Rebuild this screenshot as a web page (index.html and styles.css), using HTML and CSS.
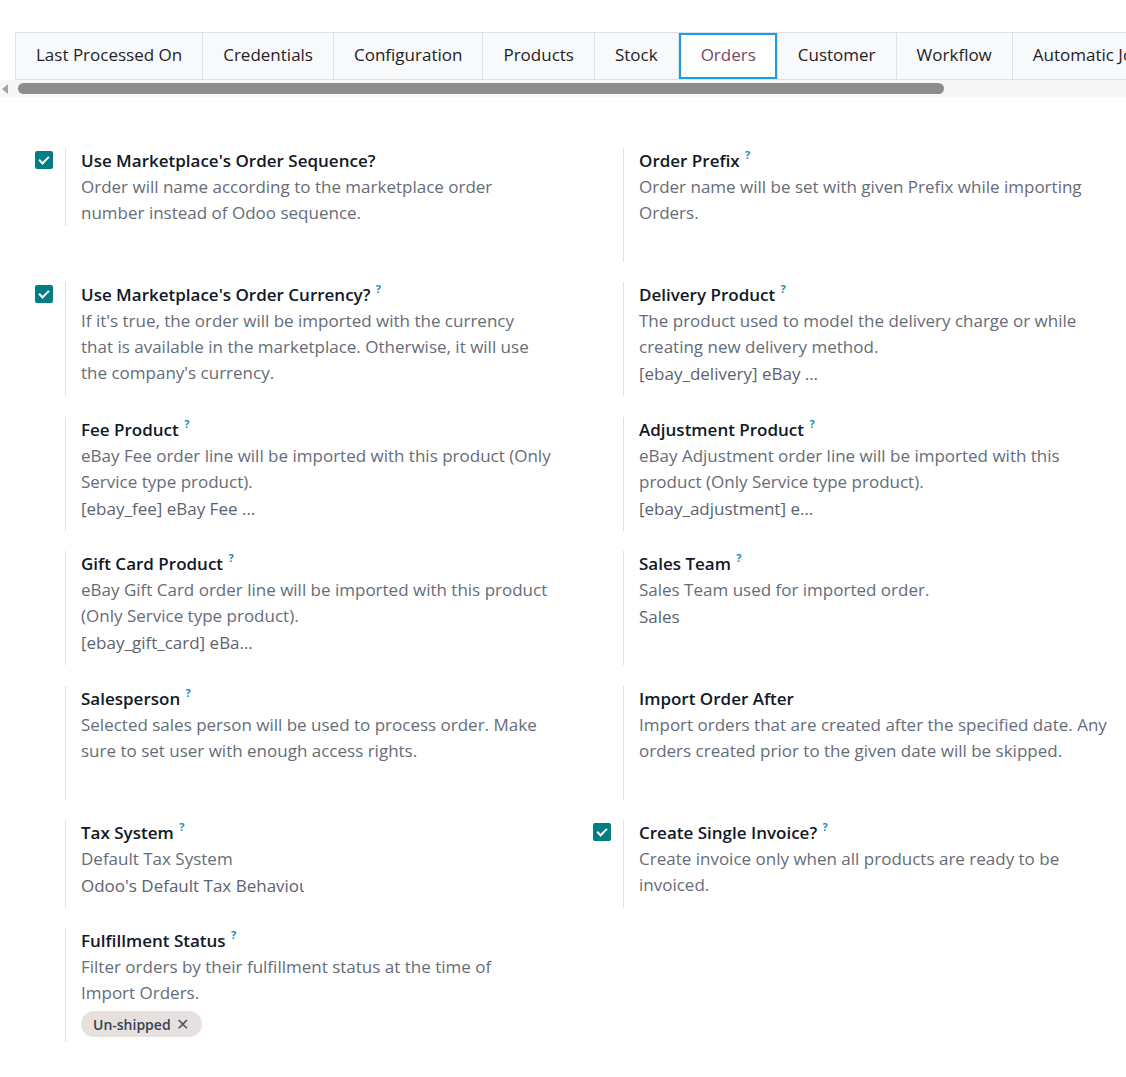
FILE: index.html
```html
<!DOCTYPE html>
<html lang="en">
<head>
  <meta charset="UTF-8">
  <title>eBay Instance - Orders</title>
  <link rel="stylesheet" href="styles.css">
</head>
<body>

  <div class="tabs-wrap">
    <nav class="tabs">
      <a class="tab">Last Processed On</a>
      <a class="tab">Credentials</a>
      <a class="tab">Configuration</a>
      <a class="tab">Products</a>
      <a class="tab">Stock</a>
      <a class="tab active">Orders</a>
      <a class="tab">Customer</a>
      <a class="tab">Workflow</a>
      <a class="tab">Automatic Jobs</a>
    </nav>
  </div>
  <div class="scroll-track">
    <span class="scroll-arrow"></span>
    <span class="scroll-thumb"></span>
  </div>

  <main class="settings">

    <div class="setting compact">
      <div class="setting-left"><span class="check"></span></div>
      <div class="setting-right">
        <div class="label">Use Marketplace's Order Sequence?</div>
        <div class="desc">Order will name according to the marketplace order<br>number instead of Odoo sequence.</div>
      </div>
    </div>

    <div class="setting">
      <div class="setting-left"></div>
      <div class="setting-right">
        <div class="label">Order Prefix <sup>?</sup></div>
        <div class="desc">Order name will be set with given Prefix while importing<br>Orders.</div>
        <div class="field"></div>
      </div>
    </div>

    <div class="setting">
      <div class="setting-left"><span class="check"></span></div>
      <div class="setting-right">
        <div class="label">Use Marketplace's Order Currency? <sup>?</sup></div>
        <div class="desc">If it's true, the order will be imported with the currency<br>that is available in the marketplace. Otherwise, it will use<br>the company's currency.</div>
      </div>
    </div>

    <div class="setting">
      <div class="setting-left"></div>
      <div class="setting-right">
        <div class="label">Delivery Product <sup>?</sup></div>
        <div class="desc">The product used to model the delivery charge or while<br>creating new delivery method.</div>
        <div class="field">[ebay_delivery] eBay …</div>
      </div>
    </div>

    <div class="setting">
      <div class="setting-left"></div>
      <div class="setting-right">
        <div class="label">Fee Product <sup>?</sup></div>
        <div class="desc">eBay Fee order line will be imported with this product (Only<br>Service type product).</div>
        <div class="field">[ebay_fee] eBay Fee …</div>
      </div>
    </div>

    <div class="setting">
      <div class="setting-left"></div>
      <div class="setting-right">
        <div class="label">Adjustment Product <sup>?</sup></div>
        <div class="desc">eBay Adjustment order line will be imported with this<br>product (Only Service type product).</div>
        <div class="field">[ebay_adjustment] e…</div>
      </div>
    </div>

    <div class="setting">
      <div class="setting-left"></div>
      <div class="setting-right">
        <div class="label">Gift Card Product <sup>?</sup></div>
        <div class="desc">eBay Gift Card order line will be imported with this product<br>(Only Service type product).</div>
        <div class="field">[ebay_gift_card] eBa…</div>
      </div>
    </div>

    <div class="setting">
      <div class="setting-left"></div>
      <div class="setting-right">
        <div class="label">Sales Team <sup>?</sup></div>
        <div class="desc">Sales Team used for imported order.</div>
        <div class="field">Sales</div>
      </div>
    </div>

    <div class="setting">
      <div class="setting-left"></div>
      <div class="setting-right">
        <div class="label">Salesperson <sup>?</sup></div>
        <div class="desc">Selected sales person will be used to process order. Make<br>sure to set user with enough access rights.</div>
        <div class="field"></div>
      </div>
    </div>

    <div class="setting">
      <div class="setting-left"></div>
      <div class="setting-right">
        <div class="label">Import Order After</div>
        <div class="desc">Import orders that are created after the specified date. Any<br>orders created prior to the given date will be skipped.</div>
        <div class="field"></div>
      </div>
    </div>

    <div class="setting">
      <div class="setting-left"></div>
      <div class="setting-right">
        <div class="label">Tax System <sup>?</sup></div>
        <div class="desc">Default Tax System</div>
        <div class="field select">Odoo's Default Tax Behaviour</div>
      </div>
    </div>

    <div class="setting">
      <div class="setting-left"><span class="check"></span></div>
      <div class="setting-right">
        <div class="label">Create Single Invoice? <sup>?</sup></div>
        <div class="desc">Create invoice only when all products are ready to be<br>invoiced.</div>
      </div>
    </div>

    <div class="setting">
      <div class="setting-left"></div>
      <div class="setting-right">
        <div class="label">Fulfillment Status <sup>?</sup></div>
        <div class="desc">Filter orders by their fulfillment status at the time of<br>Import Orders.</div>
        <div class="field">
          <span class="tag">Un-shipped <span class="tag-x">✕</span></span>
        </div>
      </div>
    </div>

  </main>

</body>
</html>
```
FILE: styles.css
```css
body {
  margin: 0;
  font-family: "Open Sans", sans-serif;
  font-size: 17px;
  line-height: 26px;
  color: #1f2328;
  background-color: #ffffff;
  overflow: hidden;
}

/* notebook tabs */
.tabs-wrap {
  margin: 32px 0 0 15px;
  overflow: hidden;
}
.tabs {
  display: flex;
  border-top: 1px solid #dee2e6;
  border-bottom: 1px solid #dee2e6;
  white-space: nowrap;
}
.tab {
  flex: none;
  padding: 0 20px;
  height: 46px;
  line-height: 44px;
  border-left: 1px solid #dee2e6;
  background-color: #f8f9fa;
  color: #1f2328;
}
.tab.active {
  padding: 0 21px 0 22px;
  background-color: #ffffff;
  color: #714b67;
  box-shadow: inset 0 0 0 2px #1a9cf0;
}

/* horizontal scrollbar under the tabs */
.scroll-track {
  display: flex;
  align-items: center;
  height: 17px;
  background-color: #f7f7f7;
}
.scroll-arrow {
  width: 0;
  height: 0;
  margin-left: 2px;
  border-top: 5px solid transparent;
  border-bottom: 5px solid transparent;
  border-right: 6px solid #a3a3a3;
}
.scroll-thumb {
  width: 926px;
  height: 11px;
  margin-left: 10px;
  border-radius: 6px;
  background-color: #8c8c8c;
}

/* settings */
.settings {
  display: grid;
  grid-template-columns: 558px 558px;
  row-gap: 20.4px;
  padding: 51px 0 0 23px;
}
.setting {
  display: flex;
}
.setting.compact {
  align-self: start;
}
.setting-left {
  flex: none;
  width: 30px;
  padding-left: 12px;
}
.setting-right {
  flex: 1;
  border-left: 1px solid #dee2e6;
  padding-left: 15px;
}
.check {
  display: block;
  width: 18px;
  height: 18px;
  margin-top: 3px;
  border-radius: 2px;
  background-color: #017e84;
  position: relative;
}
.check::after {
  content: "";
  position: absolute;
  left: 6px;
  top: 3px;
  width: 4px;
  height: 8px;
  border: solid #ffffff;
  border-width: 0 2px 2px 0;
  transform: rotate(45deg);
}
.label {
  font-weight: 600;
  color: #111827;
  white-space: nowrap;
}
.label sup {
  font-size: 11px;
  font-weight: 700;
  color: #1b8bb8;
  vertical-align: top;
  line-height: 14px;
  margin-left: 1px;
}
.desc {
  color: #666c78;
  white-space: nowrap;
}
.field {
  height: 36px;
  padding-top: 1px;
  box-sizing: border-box;
  color: #5d636e;
  white-space: nowrap;
}
.field.select {
  width: 223px;
  overflow: hidden;
}
.tag {
  display: inline-block;
  margin-top: 4px;
  padding: 0 13px 0 12px;
  height: 26px;
  line-height: 26px;
  border-radius: 13px;
  background-color: #e6e0df;
  color: #374151;
  font-size: 14px;
  font-weight: 600;
}
.tag-x {
  font-size: 16px;
  font-weight: 400;
  margin-left: 2px;
  color: #4b5563;
}
```
